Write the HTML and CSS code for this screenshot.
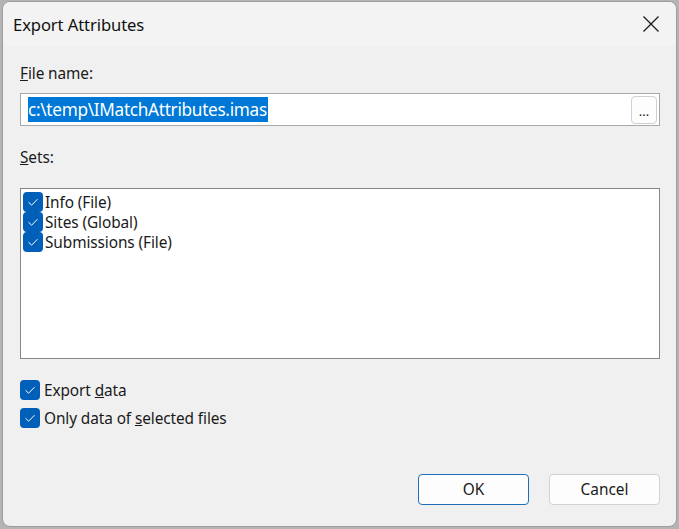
FILE: index.html
```html
<!DOCTYPE html>
<html>
<head>
<meta charset="utf-8">
<link rel="stylesheet" href="styles.css">
</head>
<body>
<div class="window">
  <div class="titlebar">
    <span class="title">Export Attributes</span>
    <svg class="close" width="18" height="18" viewBox="0 0 18 18"><path d="M1.5 1.5 L16.5 16.5 M16.5 1.5 L1.5 16.5" stroke="#1a1a1a" stroke-width="1.3" fill="none"/></svg>
  </div>
  <div class="content">
    <div class="label label-file"><u>F</u>ile name:</div>
    <div class="input">
      <span class="sel">c:\temp\IMatchAttributes.imas</span>
      <span class="browse">...</span>
    </div>
    <div class="label label-sets"><u>S</u>ets:</div>
    <div class="list">
      <div class="item"><span class="cb"><svg width="20" height="20" viewBox="0 0 20 20"><path d="M5.5 10.2 L8.6 13.2 L14.5 7.2" stroke="#fff" stroke-width="1" fill="none"/></svg></span><span class="txt">Info (File)</span></div>
      <div class="item"><span class="cb"><svg width="20" height="20" viewBox="0 0 20 20"><path d="M5.5 10.2 L8.6 13.2 L14.5 7.2" stroke="#fff" stroke-width="1" fill="none"/></svg></span><span class="txt">Sites (Global)</span></div>
      <div class="item"><span class="cb"><svg width="20" height="20" viewBox="0 0 20 20"><path d="M5.5 10.2 L8.6 13.2 L14.5 7.2" stroke="#fff" stroke-width="1" fill="none"/></svg></span><span class="txt">Submissions (File)</span></div>
    </div>
    <div class="checks">
      <div class="check"><span class="cb"><svg width="20" height="20" viewBox="0 0 20 20"><path d="M5.5 10.2 L8.6 13.2 L14.5 7.2" stroke="#fff" stroke-width="1" fill="none"/></svg></span><span class="txt">Export <u>d</u>ata</span></div>
      <div class="check"><span class="cb"><svg width="20" height="20" viewBox="0 0 20 20"><path d="M5.5 10.2 L8.6 13.2 L14.5 7.2" stroke="#fff" stroke-width="1" fill="none"/></svg></span><span class="txt">Only data of <u>s</u>elected files</span></div>
    </div>
    <div class="buttons">
      <button class="btn btn-ok">OK</button>
      <button class="btn">Cancel</button>
    </div>
  </div>
</div>
</body>
</html>
```

FILE: styles.css
```css
html, body {
  margin: 0;
  padding: 0;
}
body {
  background: #b4b4b4;
  width: 679px;
  height: 529px;
  overflow: hidden;
  font-family: "Noto Sans", "Open Sans", sans-serif;
  color: #1a1a1a;
}
.window {
  box-sizing: border-box;
  margin: 1px 0 0 2px;
  width: 675px;
  height: 526px;
  background: #f0f0f0;
  border: 1px solid #9c9c9c;
  border-radius: 8px;
  overflow: hidden;
  display: flex;
  flex-direction: column;
}
.titlebar {
  height: 44px;
  flex: 0 0 44px;
  background: #f3f3f3;
  display: flex;
  align-items: center;
  justify-content: space-between;
  padding: 0 16px 0 10px;
}
.title {
  font-size: 16.6px;
  letter-spacing: -0.1px;
  color: #111;
}
.close {
  display: block;
}
.content {
  flex: 1;
  display: flex;
  flex-direction: column;
  padding: 0 16px 0 17px;
  font-size: 15.4px;
}
.label {
  height: 20px;
  line-height: 20px;
  letter-spacing: -0.1px;
}
.label-file {
  margin-top: 18px;
}
.input {
  margin-top: 9px;
  height: 33px;
  box-sizing: border-box;
  background: #fff;
  border: 1px solid #a8a8a8;
  display: flex;
  align-items: center;
  justify-content: space-between;
  padding: 0 2px 0 7px;
}
.sel {
  background: #0078d7;
  color: #fff;
  font-size: 17.2px;
  line-height: 25px;
  letter-spacing: -0.3px;
  padding: 0 1px 0 0;
}
.browse {
  width: 26px;
  height: 28px;
  box-sizing: border-box;
  background: #fdfdfd;
  border: 1px solid #d0d0d0;
  border-radius: 4px;
  font-size: 13px;
  line-height: 28px;
  text-align: center;
}
.label-sets {
  margin-top: 22px;
}
.list {
  margin-top: 20px;
  height: 171px;
  box-sizing: border-box;
  background: #fff;
  border: 1px solid #868686;
  padding: 3px 2px;
}
.item {
  display: flex;
  align-items: center;
  height: 20px;
  letter-spacing: -0.1px;
}
.txt {
  white-space: pre;
}
.cb {
  width: 20px;
  height: 20px;
  flex: 0 0 20px;
  background: #005fb8;
  border-radius: 4px;
  margin-right: 2px;
  display: block;
}
.cb svg {
  display: block;
}
.checks {
  margin-top: 21px;
  display: flex;
  flex-direction: column;
  gap: 8px;
}
.check {
  display: flex;
  align-items: center;
  height: 20px;
  letter-spacing: -0.1px;
}
.check .cb {
  margin-right: 4px;
}
.buttons {
  margin-top: 46px;
  display: flex;
  justify-content: flex-end;
  gap: 20px;
}
.btn {
  width: 111px;
  height: 31px;
  box-sizing: border-box;
  background: #fdfdfd;
  border: 1px solid #d2d2d2;
  border-radius: 4px;
  font-family: "Noto Sans", "Open Sans", sans-serif;
  font-size: 15.4px;
  color: #1a1a1a;
  padding: 0;
}
.btn-ok {
  border-color: #1f6fb8;
}
```
